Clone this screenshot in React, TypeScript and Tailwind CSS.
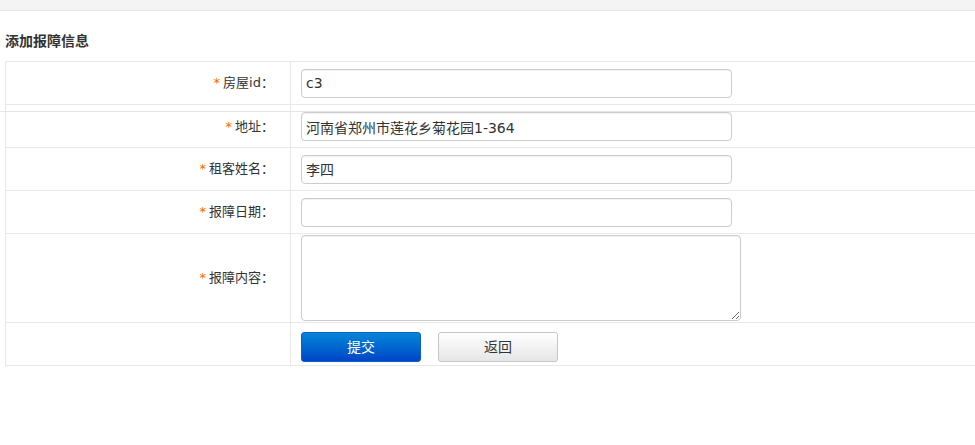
import React from "react";

const font = { fontFamily: '"DejaVu Sans", "Noto Sans CJK SC", sans-serif' };

function Label({ text }: { text: string }) {
  return (
    <span className="text-[13px] text-[#333]">
      <span className="text-[#ff6600] mr-[3px]">*</span>
      {text}：
    </span>
  );
}

const inputCls =
  "w-[431px] h-[29px] border border-[#cccccc] rounded-[4px] px-[4px] text-[14px] text-[#333] bg-white outline-none shadow-[inset_0_1px_1px_rgba(0,0,0,0.06)]";

export default function App() {
  return (
    <div className="w-[975px] h-[445px] bg-white overflow-hidden" style={font}>
      <div className="h-[11px] bg-[#f4f4f4] border-b border-[#e5e5e5]" />
      <div className="h-[50px] pt-[19px] pl-[5px]">
        <h3 className="text-[14px] leading-[20px] font-bold text-[#333]" style={{ fontFamily: '"Noto Sans CJK SC", sans-serif' }}>
          添加报障信息
        </h3>
      </div>

      <div className="ml-[5px] border-l border-t border-[#e8e8e8]">
        <div className="flex h-[43px] border-b border-[#e8e8e8]">
          <div className="w-[285px] border-r border-[#e8e8e8] flex items-center justify-end pr-[16px]">
            <Label text="房屋id" />
          </div>
          <div className="flex items-center pl-[10px]">
            <input className={inputCls} defaultValue="c3" />
          </div>
        </div>
        <div className="flex h-[6px]">
          <div className="w-[285px] border-r border-[#e8e8e8]" />
        </div>
      </div>
      <div className="border-t border-[#e5e5e5]" />
      <div className="ml-[5px] border-l border-[#e8e8e8]">
        <div className="flex h-[36px] border-b border-[#e8e8e8]">
          <div className="w-[285px] border-r border-[#e8e8e8] flex items-center justify-end pr-[16px] pb-[5px]">
            <Label text="地址" />
          </div>
          <div className="flex items-start pl-[10px]">
            <input className={inputCls} defaultValue="河南省郑州市莲花乡菊花园1-364" />
          </div>
        </div>
        <div className="flex h-[43px] border-b border-[#e8e8e8]">
          <div className="w-[285px] border-r border-[#e8e8e8] flex items-center justify-end pr-[16px]">
            <Label text="租客姓名" />
          </div>
          <div className="flex items-center pl-[10px]">
            <input className={inputCls} defaultValue="李四" />
          </div>
        </div>
        <div className="flex h-[43px] border-b border-[#e8e8e8]">
          <div className="w-[285px] border-r border-[#e8e8e8] flex items-center justify-end pr-[16px]">
            <Label text="报障日期" />
          </div>
          <div className="flex items-center pl-[10px]">
            <input className={inputCls} defaultValue="" />
          </div>
        </div>
        <div className="flex h-[89px] border-b border-[#e8e8e8]">
          <div className="w-[285px] border-r border-[#e8e8e8] flex items-center justify-end pr-[16px]">
            <Label text="报障内容" />
          </div>
          <div className="flex items-start pl-[10px] pt-[1px]">
            <textarea className="w-[440px] h-[86px] border border-[#cccccc] rounded-[4px] p-[4px] text-[14px] text-[#333] bg-white outline-none shadow-[inset_0_1px_1px_rgba(0,0,0,0.06)]" />
          </div>
        </div>
        <div className="flex h-[43px] border-b border-[#e8e8e8]">
          <div className="w-[285px] border-r border-[#e8e8e8]" />
          <div className="flex items-start pl-[10px] pt-[9px] gap-[17px]">
            <button className="w-[120px] h-[30px] rounded-[3px] border border-[#0a5fc0] bg-gradient-to-b from-[#0b86d6] to-[#0044c8] text-white text-[14px]">
              提交
            </button>
            <button className="w-[120px] h-[30px] rounded-[3px] border border-[#c6c6c6] bg-gradient-to-b from-[#ffffff] to-[#e6e6e6] text-[#333] text-[14px]">
              返回
            </button>
          </div>
        </div>
      </div>
    </div>
  );
}
